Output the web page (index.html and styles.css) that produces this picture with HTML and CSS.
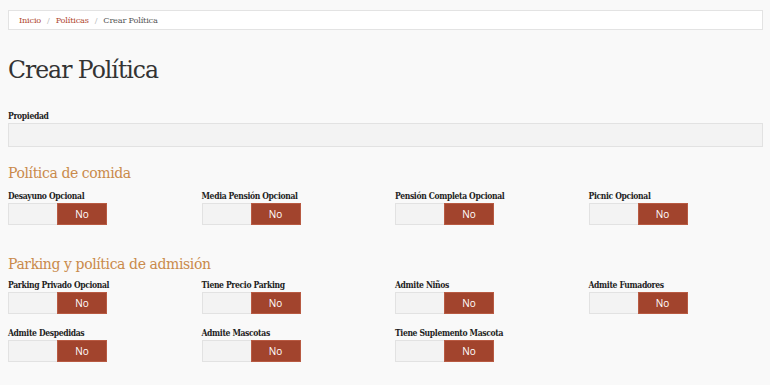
FILE: index.html
```html
<!DOCTYPE html>
<html lang="es">
<head>
<meta charset="utf-8">
<link rel="stylesheet" href="styles.css">
</head>
<body>
<div class="page">
  <nav class="breadcrumb">
    <a href="#">Inicio</a><span class="sep">/</span><a href="#">Políticas</a><span class="sep">/</span><span class="current">Crear Política</span>
  </nav>
  <h1 class="title">Crear Política</h1>
  <div class="field">
    <label class="label">Propiedad</label>
    <div class="input"></div>
  </div>
  <h2 class="section">Política de comida</h2>
  <div class="grid">
    <div class="item"><label class="label">Desayuno Opcional</label><div class="toggle"><span class="off"></span><span class="on">No</span></div></div>
    <div class="item"><label class="label">Media Pensión Opcional</label><div class="toggle"><span class="off"></span><span class="on">No</span></div></div>
    <div class="item"><label class="label">Pensión Completa Opcional</label><div class="toggle"><span class="off"></span><span class="on">No</span></div></div>
    <div class="item"><label class="label">Picnic Opcional</label><div class="toggle"><span class="off"></span><span class="on">No</span></div></div>
  </div>
  <h2 class="section second">Parking y política de admisión</h2>
  <div class="grid">
    <div class="item"><label class="label">Parking Privado Opcional</label><div class="toggle"><span class="off"></span><span class="on">No</span></div></div>
    <div class="item"><label class="label">Tiene Precio Parking</label><div class="toggle"><span class="off"></span><span class="on">No</span></div></div>
    <div class="item"><label class="label">Admite Niños</label><div class="toggle"><span class="off"></span><span class="on">No</span></div></div>
    <div class="item"><label class="label">Admite Fumadores</label><div class="toggle"><span class="off"></span><span class="on">No</span></div></div>
    <div class="item"><label class="label">Admite Despedidas</label><div class="toggle"><span class="off"></span><span class="on">No</span></div></div>
    <div class="item"><label class="label">Admite Mascotas</label><div class="toggle"><span class="off"></span><span class="on">No</span></div></div>
    <div class="item"><label class="label">Tiene Suplemento Mascota</label><div class="toggle"><span class="off"></span><span class="on">No</span></div></div>
  </div>
</div>
</body>
</html>
```

FILE: styles.css
```css
html, body {
  margin: 0;
  padding: 0;
  background: #f9f9f9;
}
body {
  font-family: "DejaVu Serif", "Liberation Serif", serif;
  color: #333;
}
.page {
  padding: 10px 7px 0 8px;
}
.breadcrumb {
  height: 18px;
  background: #fff;
  border: 1px solid #e3e3e3;
  display: flex;
  align-items: center;
  padding: 0 10px;
  font-size: 8.2px;
  letter-spacing: -0.2px;
  color: #555;
}
.breadcrumb a {
  color: #b0492f;
  text-decoration: none;
}
.breadcrumb .sep {
  color: #bbb;
  margin: 0 6px;
}
.title {
  margin: 25px 0 0 0;
  font-size: 23.5px;
  font-weight: normal;
  color: #333;
  line-height: 30px;
  letter-spacing: -1px;
}
.field {
  margin-top: 26px;
}
.label {
  display: block;
  font-size: 8.5px;
  font-weight: bold;
  font-stretch: condensed;
  color: #222;
  line-height: 11px;
  letter-spacing: -0.35px;
  margin-bottom: 1px;
}
.input {
  height: 22px;
  background: #f3f3f3;
  border: 1px solid #e2e2e2;
}
.section {
  margin: 16px 0 0 0;
  font-size: 14px;
  line-height: 20px;
  font-weight: normal;
  letter-spacing: -0.4px;
  color: #c98a4b;
}
.section.second {
  margin-top: 29px;
}
.grid {
  margin-top: 8px;
  display: grid;
  grid-template-columns: repeat(4, 1fr);
  column-gap: 19px;
  row-gap: 14px;
}
.section.second + .grid {
  margin-top: 6px;
}
.toggle {
  display: flex;
  width: 99px;
  height: 22px;
}
.off {
  width: 48px;
  background: #f3f3f3;
  border: 1px solid #e2e2e2;
  border-right: none;
}
.on {
  flex: 1;
  background: #a2442d;
  border: 1px solid #b85a42;
  color: #fff;
  font-family: "Open Sans", "Liberation Sans", sans-serif;
  font-size: 10px;
  display: flex;
  align-items: center;
  justify-content: center;
}
```
